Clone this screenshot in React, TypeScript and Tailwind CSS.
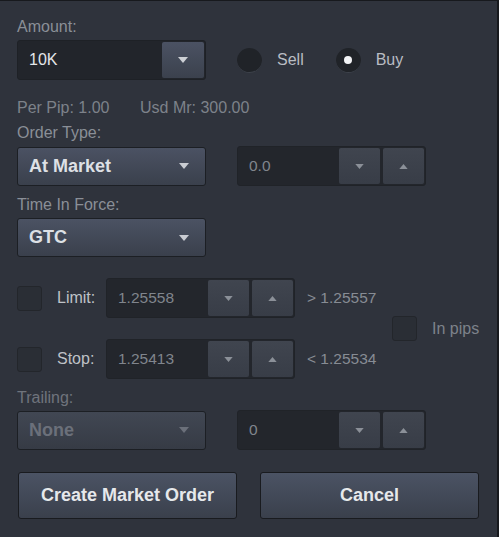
import React from "react";

const font = { fontFamily: '"Liberation Sans", Arial, sans-serif' };

const Caret = ({ up = false, small = false, className = "" }: { up?: boolean; small?: boolean; className?: string }) => (
  <svg width={small ? 9 : 10} height={small ? 5 : 6} viewBox="0 0 10 6" className={className}>
    {up ? <path d="M0 6 L5 0 L10 6 Z" fill="currentColor" /> : <path d="M0 0 L10 0 L5 6 Z" fill="currentColor" />}
  </svg>
);

const Select = ({ value, disabled = false }: { value: string; disabled?: boolean }) => (
  <div
    className={`w-[189px] h-[39px] rounded-[3px] border border-[#1c1f24] flex items-center justify-between pl-[11px] pr-[16px] ${
      disabled
        ? "bg-gradient-to-b from-[#414753] to-[#363b45] text-[#6b707a]"
        : "bg-gradient-to-b from-[#4b5263] to-[#3a404c] text-[#dde0e5]"
    }`}
  >
    <span className="text-[18px] font-bold">{value}</span>
    <Caret className={disabled ? "text-[#6b707a]" : "text-[#c9ccd2]"} />
  </div>
);

const SpinBtn = ({ up = false }: { up?: boolean }) => (
  <div className="w-[41px] h-full rounded-[2px] bg-gradient-to-b from-[#40454f] to-[#383d47] flex items-center justify-center">
    <Caret up={up} small className="text-[#8b9098]" />
  </div>
);

const NumberInput = ({ value }: { value: string }) => (
  <div className="w-[189px] h-[40px] rounded-[3px] bg-[#23262c] border border-[#202328] flex items-stretch p-[1px]">
    <div className="flex-1 flex items-center pl-[10px] text-[15.5px] text-[#80858d]">{value}</div>
    <div className="flex gap-[3px]">
      <SpinBtn />
      <SpinBtn up />
    </div>
  </div>
);

const Radio = ({ label, checked = false }: { label: string; checked?: boolean }) => (
  <div className="flex items-center gap-[15px]">
    <div className="w-[25px] h-[25px] rounded-full bg-[#202328] border-b border-[#3d424b] flex items-center justify-center">
      {checked && <div className="w-[8px] h-[8px] rounded-full bg-[#f2f3f5]" />}
    </div>
    <span className="text-[16px] text-[#b9bdc3]">{label}</span>
  </div>
);

const Check = () => (
  <div className="w-[25px] h-[25px] rounded-[3px] bg-[#2a2e35] border border-[#23262b]" />
);

const Label = ({ children, dim = false }: { children: React.ReactNode; dim?: boolean }) => (
  <div className={`h-[16px] leading-[16px] text-[16px] ${dim ? "text-[#6f747c]" : "text-[#8a8f97]"}`}>{children}</div>
);

const Button = ({ children }: { children: React.ReactNode }) => (
  <button className="w-[219px] h-[47px] rounded-[3px] border border-[#191b1f] bg-gradient-to-b from-[#4b5364] to-[#3a404c] text-[18px] font-bold text-[#e6e8eb]">
    {children}
  </button>
);

export default function App() {
  return (
    <div
      style={font}
      className="w-[499px] h-[537px] bg-[#2f333c] border-t border-r-2 border-[#17191d] pl-[17px] flex flex-col"
    >
      <div className="mt-[18px]">
        <Label>Amount:</Label>
      </div>

      <div className="mt-[5px] flex items-center">
        <div className="w-[189px] h-[40px] rounded-[3px] bg-[#22252b] border border-[#1e2126] flex items-stretch p-[1px]">
          <div className="flex-1 flex items-center pl-[10px] text-[16px] text-[#e4e6e9]">10K</div>
          <div className="w-[42px] rounded-[2px] bg-gradient-to-b from-[#4b5263] to-[#3b414d] flex items-center justify-center">
            <Caret className="text-[#cdd0d5]" />
          </div>
        </div>
        <div className="ml-[31px] flex items-center gap-[32px]">
          <Radio label="Sell" />
          <Radio label="Buy" checked />
        </div>
      </div>

      <div className="mt-[20px] flex text-[16px] leading-[16px] text-[#7d828a]">
        <span className="w-[123px]">Per Pip: 1.00</span>
        <span>Usd Mr: 300.00</span>
      </div>

      <div className="mt-[9px]">
        <Label>Order Type:</Label>
      </div>
      <div className="mt-[5px] flex items-center gap-[31px]">
        <Select value="At Market" />
        <NumberInput value="0.0" />
      </div>

      <div className="mt-[11px]">
        <Label>Time In Force:</Label>
      </div>
      <div className="mt-[5px]">
        <Select value="GTC" />
      </div>

      <div className="mt-[21px] flex items-center">
        <div className="w-[360px] flex flex-col gap-[21px]">
          {[
            { label: "Limit:", value: "1.25558", hint: "> 1.25557" },
            { label: "Stop:", value: "1.25413", hint: "< 1.25534" },
          ].map((row) => (
            <div key={row.label} className="flex items-center">
              <Check />
              <span className="ml-[15px] w-[49px] text-[16px] text-[#bfc2c7]">{row.label}</span>
              <NumberInput value={row.value} />
              <span className="ml-[12px] text-[15.5px] text-[#878c94]">{row.hint}</span>
            </div>
          ))}
        </div>
        <div className="ml-[15px] flex items-center gap-[15px]">
          <Check />
          <span className="text-[16px] text-[#7d828a]">In pips</span>
        </div>
      </div>

      <div className="mt-[11px]">
        <Label dim>Trailing:</Label>
      </div>
      <div className="mt-[4px] flex items-center gap-[31px]">
        <Select value="None" disabled />
        <NumberInput value="0" />
      </div>

      <div className="mt-[22px] flex gap-[23px] pl-[1px]">
        <Button>Create Market Order</Button>
        <Button>Cancel</Button>
      </div>
    </div>
  );
}
